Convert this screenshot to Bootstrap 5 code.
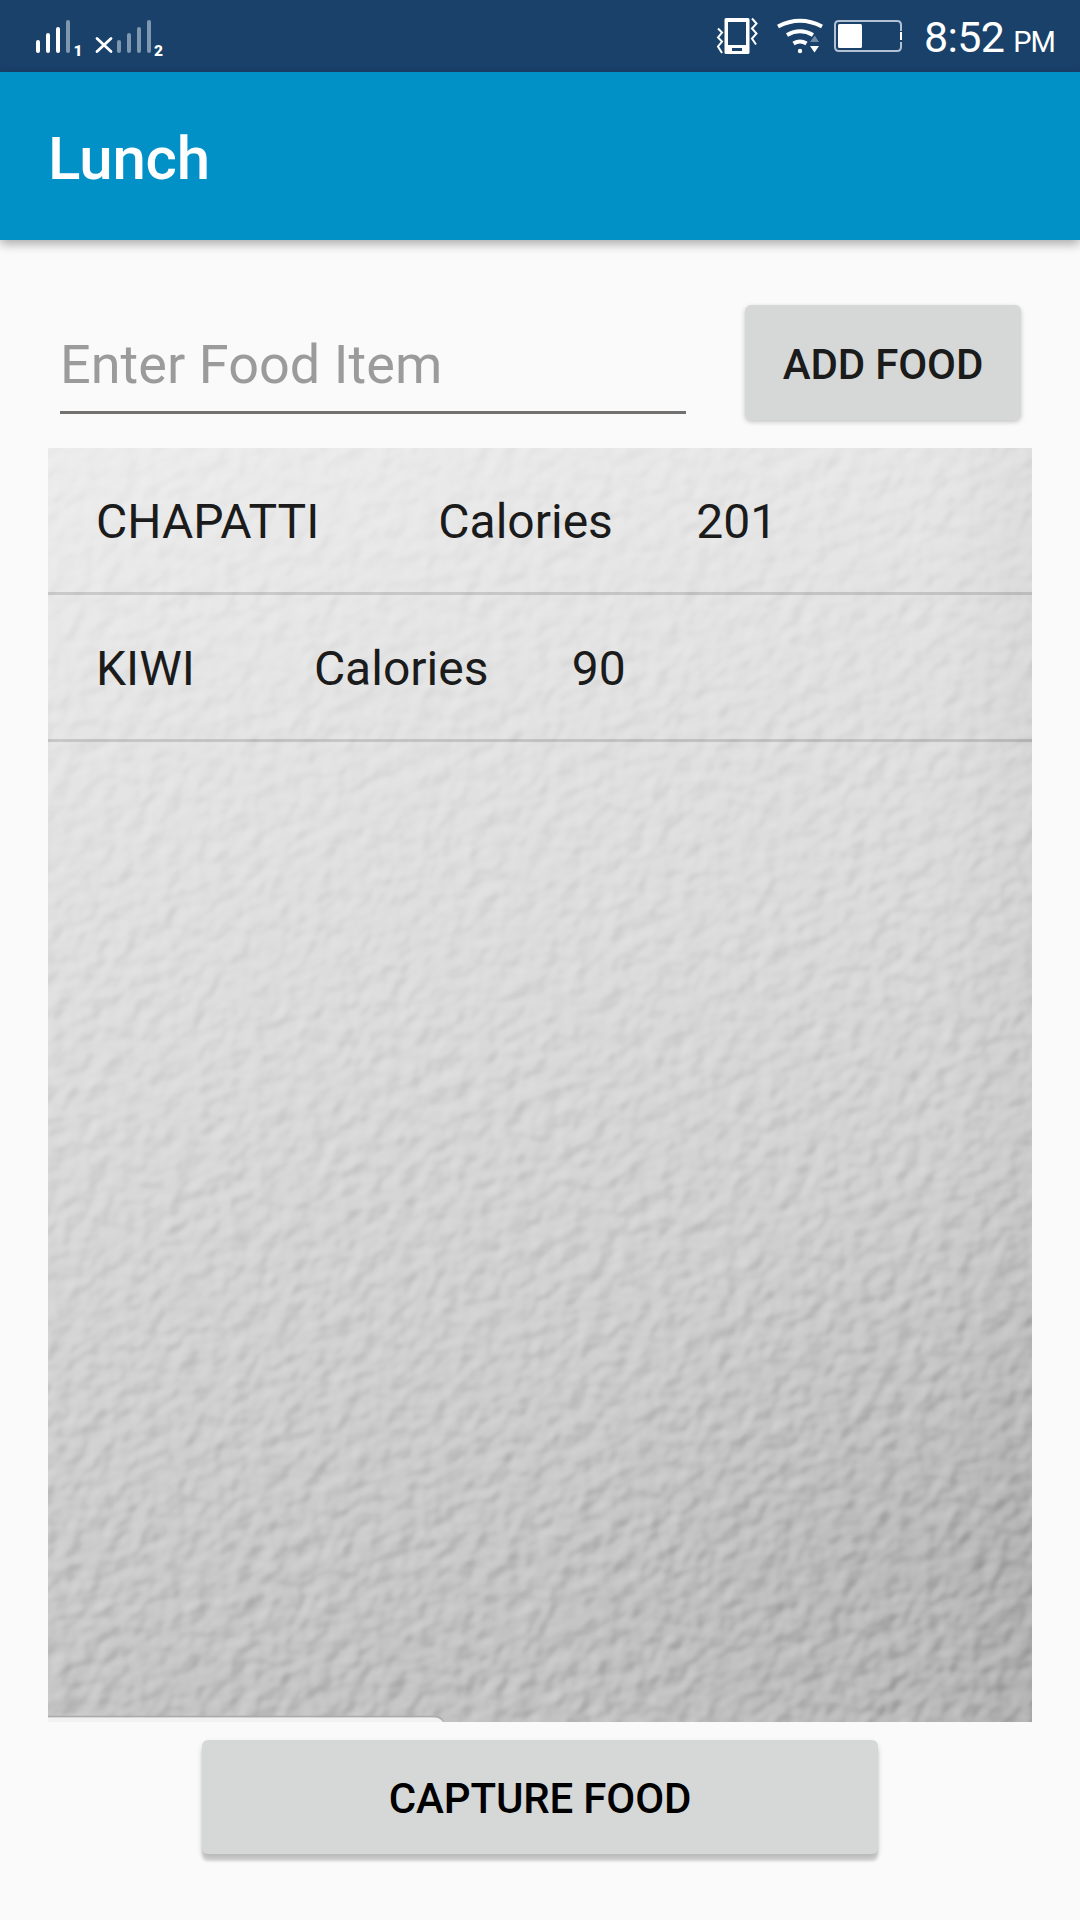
<!DOCTYPE html>
<html lang="en">
<head>
<meta charset="utf-8">
<meta name="viewport" content="width=device-width, initial-scale=1">
<title>Lunch</title>
<link href="https://cdn.jsdelivr.net/npm/bootstrap@5.3.0/dist/css/bootstrap.min.css" rel="stylesheet">
<style>
  body { font-family: Roboto, "Noto Sans", sans-serif; background: #fafafa; height: 1920px; overflow: hidden; }
  .status-bar { height: 72px; background: #19416a; padding: 0 25px 0 30px; }
  .clock { font-size: 43px; line-height: 67px; padding-top: 7px; margin-left: 20px; white-space: nowrap; letter-spacing: -.7px; }
  .clock span { font-size: 29px; margin-left: 9px; letter-spacing: -.9px; }
  .app-bar { height: 168px; background: #0191c7; padding: 6px 48px 0; box-shadow: 0 4px 10px rgba(0,0,0,.32); }
  .app-title { font-size: 60px; font-weight: 500; line-height: 1; letter-spacing: -.2px; }
  .entry { height: 208px; padding: 65px 59px 0 60px; }
  .food-input { width: 626px; height: 109px; font-size: 54px; line-height: 64px; padding: 12px 0 0; background: transparent; border: 0; border-bottom: 3px solid #737070; border-radius: 0; color: #1b1b1b; letter-spacing: .05px; }
  .food-input::placeholder { color: #9b9b9b; opacity: 1; }
  .btn-food { font-size: 42px; font-weight: 500; line-height: 1; padding: 0; border: 0; border-radius: 6px; background: #d6d8d7; letter-spacing: -.15px; }
  .btn-add { width: 276px; height: 115px; padding-top: 4px; color: #1b1b1b; box-shadow: 0 2px 5px rgba(0,0,0,.22); }
  .btn-capture { width: 676px; height: 114px; margin-top: 18px; padding-top: 3px; color: #000; box-shadow: 0 7px 3px rgba(0,0,0,.16), 0 3px 6px rgba(0,0,0,.14); }
  .food-panel { height: 1274px; margin: 0 48px; }
  .paper { z-index: 0; }
  .food-list { z-index: 1; }
  .food-row { height: 147px; padding: 2px 48px 0; font-size: 48px; line-height: 144px; color: #1b1b1b; white-space: pre; border-bottom: 3px solid rgba(0,0,0,.135); }
</style>
<script src="https://cdn.jsdelivr.net/npm/bootstrap@5.3.0/dist/js/bootstrap.bundle.min.js"></script>
</head>
<body class="d-flex flex-column">
  <header>
    <div class="status-bar d-flex align-items-center text-white">
      <svg width="140" height="72" viewBox="30 0 140 72" aria-hidden="true">
        <g stroke-width="4" stroke-linecap="round" stroke="#fff">
          <path d="M38 42V51M48 35V51M58 29V51"/>
          <path d="M68 22V51M119 42V51M129 35V51M139 29V51M149 22V51" stroke="#7f97af"/>
          <path d="M97 38.500L111 51.500M111 38.500L97 51.500" stroke-width="2.800"/>
        </g>
        <g fill="#fff" font-family="Roboto" font-weight="900" font-size="15.500"><text x="73.500" y="55.500">1</text><text x="154" y="55.500">2</text></g>
      </svg>
      <svg class="ms-auto" width="190" height="72" viewBox="714 0 190 72" aria-hidden="true">
        <g fill="none" stroke="#fff">
          <path fill="#fff" stroke="none" fill-rule="evenodd" d="M726 18h22a1.500 1.500 0 0 1 1.500 1.500v33a1.500 1.500 0 0 1-1.500 1.500h-22a1.500 1.500 0 0 1-1.500-1.500v-33a1.500 1.500 0 0 1 1.500-1.500zM728 22v23h18V22zM732 48v3h10v-3z"/>
          <path stroke-width="2" d="M718 28.500l4 4-4 5 4 4-4 5 4 6.500M752 18.500l4.500 5-4.500 5 4.500 5-4.500 5 4 6"/>
          <path stroke-width="4" d="M778 26.500Q800 15 822 26.500M787 35Q800 27.500 813 35M793.500 43.500Q800 39.500 806.500 43.500"/>
          <circle cx="800" cy="51" r="2.200" fill="#fff" stroke="none"/>
          <path fill="#718ba6" stroke="none" d="M810 42l4.800-6.500 4.200 6.500z"/>
          <path fill="#fff" stroke="none" d="M810 46h9l-4.500 6.500z"/>
          <path stroke="#b3c2d2" stroke-width="2" d="M901 31V25q0-4-4-4H839q-4 0-4 4V47q0 4 4 4H897q4 0 4-4V42"/>
          <path stroke-width="2" d="M901 32V40"/>
          <rect x="838" y="24" width="24" height="24" rx="1.500" fill="#fff" stroke="none"/>
        </g>
      </svg>
      <div class="clock">8:52<span>PM</span></div>
    </div>
    <div class="app-bar d-flex align-items-center text-white position-relative"><h1 class="app-title m-0">Lunch</h1></div>
  </header>
  <main class="d-flex flex-column">
    <form class="entry d-flex align-items-start justify-content-between">
      <input class="food-input form-control shadow-none" type="text" placeholder="Enter Food Item" aria-label="Enter Food Item">
      <button class="btn btn-food btn-add" type="button">ADD FOOD</button>
    </form>
    <section class="food-panel position-relative overflow-hidden">
      <svg class="paper position-absolute top-0 start-0" width="984" height="1274" viewBox="0 0 984 1274" aria-hidden="true">
        <defs>
          <linearGradient id="shade" x1="0" y1="0" x2=".2" y2="1">
            <stop offset="0" stop-color="#ececec"/><stop offset=".25" stop-color="#e3e3e3"/><stop offset=".5" stop-color="#dadada"/><stop offset=".75" stop-color="#cecece"/><stop offset="1" stop-color="#c1c1c1"/>
          </linearGradient>
          <radialGradient id="corner" gradientUnits="userSpaceOnUse" cx="1010" cy="1200" r="520">
            <stop offset="0" stop-color="#000" stop-opacity=".07"/><stop offset="1" stop-color="#000" stop-opacity="0"/>
          </radialGradient>
          <linearGradient id="edge"><stop offset=".9" stop-color="#000" stop-opacity="0"/><stop offset="1" stop-color="#000" stop-opacity=".03"/></linearGradient>
          <linearGradient id="depth" x1="0" y1="0" x2=".15" y2="1"><stop offset="0" stop-color="#8c8c8c"/><stop offset="1" stop-color="#d4d4d4"/></linearGradient>
          <mask id="fade" maskUnits="userSpaceOnUse" x="0" y="0" width="984" height="1274"><rect width="984" height="1274" fill="url(#depth)"/></mask>
          <filter id="grain" filterUnits="userSpaceOnUse" x="-600" y="-200" width="2200" height="2100" color-interpolation-filters="sRGB">
            <feTurbulence type="fractalNoise" baseFrequency=".054 .066" numOctaves="2" seed="7"/>
            <feColorMatrix values="0 0 0 0 0  0 0 0 0 0  0 0 0 0 0  1 0 0 0 0"/>
            <feGaussianBlur stdDeviation="2"/>
            <feDiffuseLighting surfaceScale="3.100" diffuseConstant="1" lighting-color="#fff"><feDistantLight azimuth="245" elevation="30"/></feDiffuseLighting>
          </filter>
        </defs>
        <rect width="984" height="1274" fill="url(#shade)"/>
        <rect width="984" height="1274" fill="url(#corner)"/>
        <rect width="984" height="1274" fill="url(#edge)"/>
        <g mask="url(#fade)" style="mix-blend-mode:soft-light"><g transform="rotate(-25 492 637)"><rect x="-600" y="-200" width="2200" height="2100" filter="url(#grain)"/></g></g>
        <path d="M0 1268.500H386q7 0 9 5.500" fill="none" stroke="#aaa" stroke-width="1.500"/>
        <path d="M0 1269.500H386q6 0 9 4.500H0z" fill="#f2f2f2"/>
      </svg>
      <div class="food-list position-relative">
        <div class="food-row">CHAPATTI          Calories       201</div>
        <div class="food-row">KIWI          Calories       90</div>
      </div>
    </section>
    <button class="btn btn-food btn-capture mx-auto" type="button">CAPTURE FOOD</button>
  </main>
</body>
</html>
